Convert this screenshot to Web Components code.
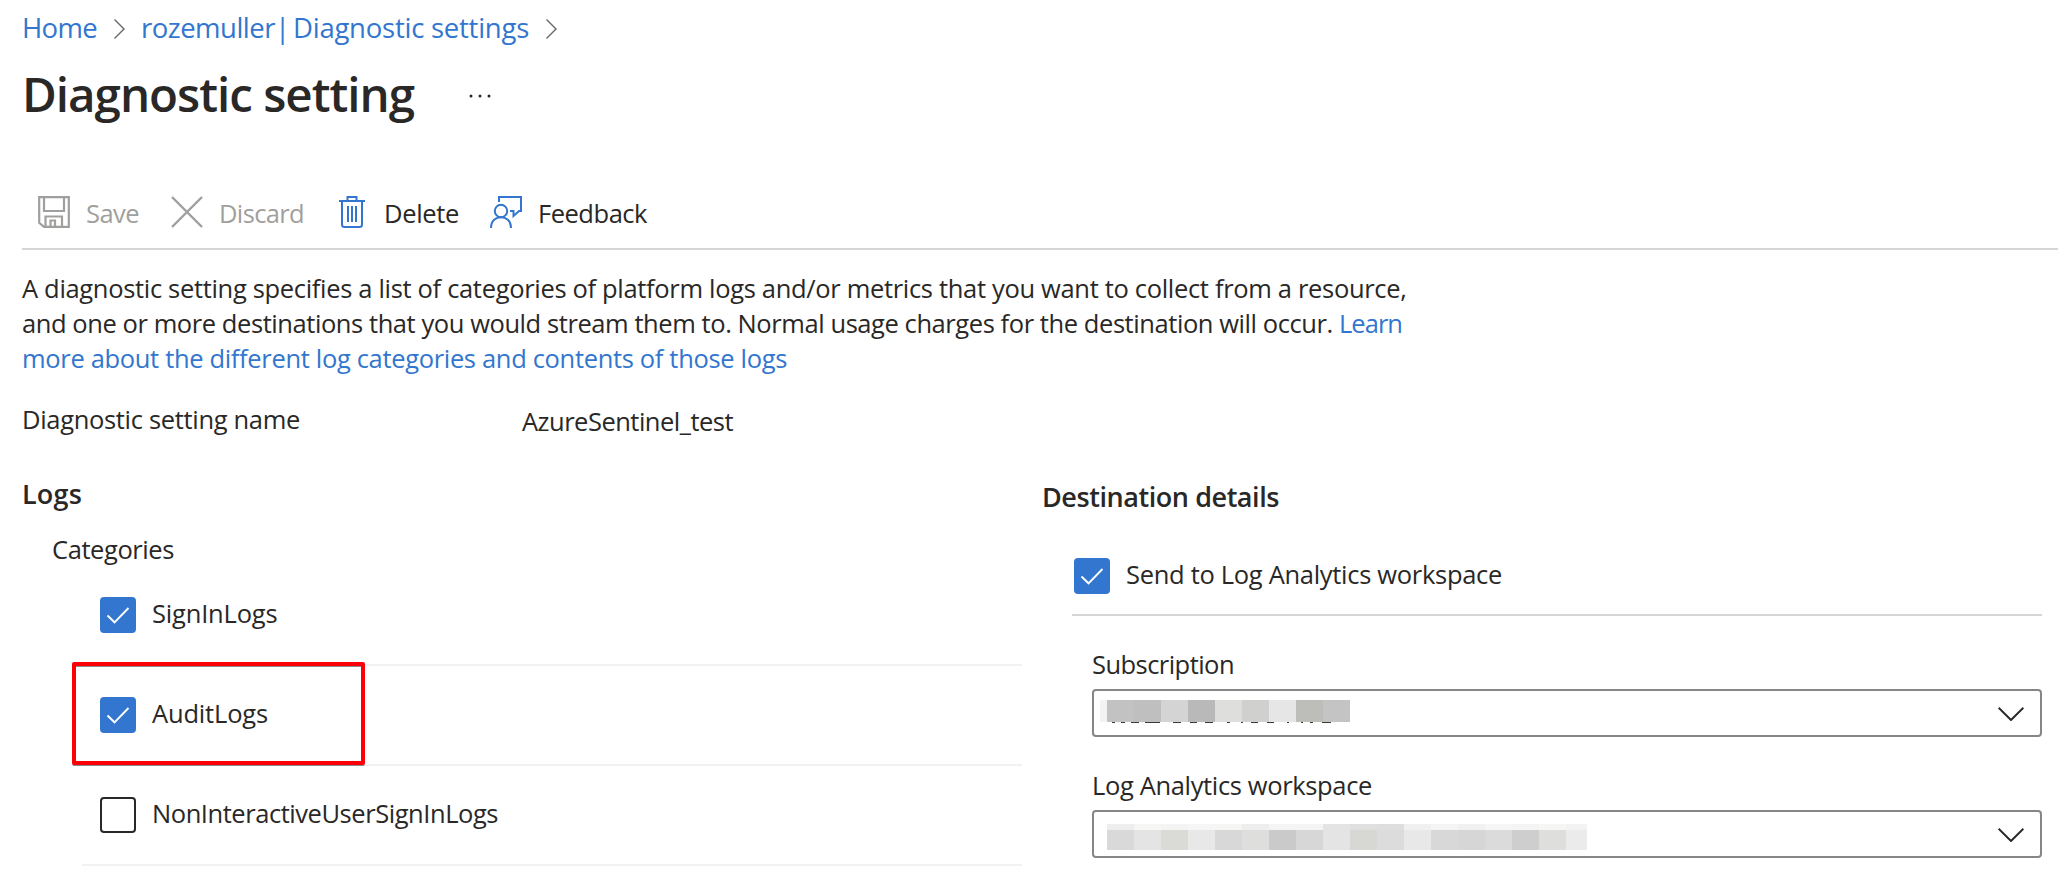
<!DOCTYPE html>
<html lang="en">
<head>
<meta charset="utf-8">
<title>Diagnostic setting</title>
<style>
html,body{margin:0;background:#fff;overflow:hidden}
body{font-family:"Open Sans","Noto Sans",sans-serif;color:#292827;width:2058px;height:884px}
</style>
</head>
<body>
<diagnostic-page></diagnostic-page>
<script>
const define=(name,html,after)=>customElements.define(name,class extends HTMLElement{
  constructor(){super();const t=document.createElement('template');t.innerHTML=html;
    this.attachShadow({mode:'open'}).append(t.content.cloneNode(true));}
  connectedCallback(){if(after)after.call(this,this.shadowRoot);}
});

/* Single-line label whose tracking is adjusted to a given width. */
define('ui-text',`<style>
:host{display:block;white-space:pre;font-size:25.5px;line-height:36px;flex:none}
span{display:inline-block}
</style><span><slot></slot></span>`,function(r){
  const s=r.querySelector('span'),w=+this.getAttribute('w');
  if(this.hasAttribute('size'))this.style.fontSize=this.getAttribute('size')+'px';
  if(w){const n=this.textContent.length;
    s.style.letterSpacing=((w-s.getBoundingClientRect().width)/n)+'px';
    this.style.width=w+'px';}
});

const icons={
save:['0 0 32 32','<path d="M1.2 1.2H30.8V30.8H6L1.2 26.8Z M6 1.5V15H26V1.5 M7.5 30.5V20.5H24V30.5 M12.5 30.5V24.5H17V30.5" stroke-width="2.2"/>'],
discard:['0 0 32 32','<path d="M1 1L31 31M31 1L1 31" stroke-width="2.4"/>'],
delete:['0 0 26 32','<path d="M0 5H26 M8.5 5V1.1H17.5V5 M3 5V28.5Q3 31 5.5 31H20.5Q23 31 23 28.5V5 M9 10V26 M13 10V26 M17 10V26" stroke-width="2"/>'],
feedback:['0 0 32 32','<circle cx="11" cy="15" r="6.2"/><path d="M1 32C1 17.5 21 17.5 21 32 M9 6V1H31V15H29L23.5 20V15H20" stroke-width="2"/>'],
crumb:['0 0 11 20','<path d="M.5 .5L10 10L.5 19.5" stroke-width="1.4"/>'],
down:['0 0 26 14','<path d="M.6 .8L13 13L25.4 .8" stroke-width="2"/>'],
check:['0 0 36 36','<path d="M7.5 18.5L14.5 25.3L28.5 11" stroke-width="1.9"/>'],
more:['0 0 22 4','<g fill="currentColor" stroke="none"><circle cx="2" cy="2" r="1.5"/><circle cx="11" cy="2" r="1.5"/><circle cx="20" cy="2" r="1.5"/></g>']
};
define('ui-icon',`<style>:host{display:block;flex:none}svg{display:block;fill:none;stroke:currentColor;stroke-width:2}</style>`,function(r){
  const icon=icons[this.getAttribute('name')];
  if(!icon||r.querySelector('svg'))return;
  const [box,body]=icon,d=box.split(' ');
  r.innerHTML+=`<svg viewBox="${box}" width="${d[2]}" height="${d[3]}">${body}</svg>`;
});

define('ui-check',`<style>
:host{display:flex;align-items:flex-start;gap:16px}
.box{box-sizing:border-box;width:36px;height:36px;border:2px solid #292827;border-radius:4px;color:#fff;flex:none}
ui-icon{display:none;margin:-2px}
:host([checked]) .box{background:#3276cf;border-color:#3276cf}
:host([checked]) ui-icon{display:block}
.label{margin-top:-2px}
</style><div class="box"><ui-icon name="check"></ui-icon></div><div class="label"><slot></slot></div>`);

define('log-row',`<style>
:host{display:block;position:relative;box-sizing:border-box;height:100px;padding:31px 0 0 18px;border-bottom:2px solid #f1f1f1}
:host([marked])::after{content:"";position:absolute;box-sizing:border-box;left:-10px;top:-4px;width:293px;height:103px;border:4px solid #fb0007;border-radius:2px;box-shadow:0 1px 0 #8a8a8a,inset 0 1px 0 #8a8a8a}
</style><slot></slot>`);

define('command-button',`<style>
:host{display:flex;align-items:center;height:36px;color:#292827}
.i{color:#3276cf;flex:none}
:host([disabled]),:host([disabled]) .i{color:#a19f9d}
.t{padding-top:2px}
</style><div class="i"></div><div class="t"><slot></slot></div>`,function(r){
  const slot=r.querySelector('.i');
  slot.innerHTML=`<ui-icon name="${this.getAttribute('icon')}"></ui-icon>`;
  slot.style.marginRight=this.getAttribute('gap')+'px';
});

define('ui-select',`<style>
:host{display:flex;justify-content:space-between;box-sizing:border-box;width:950px;height:48px;margin-top:7px;border:2px solid #868686;border-radius:4px;padding:0 16px 0 0}
ui-icon{margin-top:16px;color:#292827}
</style><slot></slot><ui-icon name="down"></ui-icon>`);

/* Redacted value: a strip of flat blocks. */
define('redacted-value',`<style>:host{display:block}svg{display:block}</style>`,function(r){
  let out='',w,h;
  if(this.getAttribute('kind')==='subscription'){
    w=250;h=24;
    out='<rect width="7" height="22" fill="#f3f3f3"/>';
    ['#c2c2c2','#bfbfbf','#d4d4d4','#b9b9b9','#dededc','#d0d0ce','#e6e6e6','#bdbdba','#c4c4c4'].forEach((c,i)=>out+=`<rect x="${7+27*i}" width="27" height="22" fill="${c}"/>`);
    [[97,105],[122,136],[152,177],[196,240],[278,302],[330,352],[374,398],[442,450],[484,490],[512,534],[560,582],[622,628],[662,668],[690,698],[726,752]].forEach(([a,b])=>out+=`<rect x="${a/3-20}" y="22" width="${(b-a)/3}" height="1" fill="#3a3938"/>`);
  }else{
    w=480;h=26;
    const top=['#eeeeee','#f6f6f4','#f4f4f4','#f6f6f6','#f6f6f4','#eeeeee','#f5f5f5','#f5f5f5','#e4e4e4','#e0e0e0','#dedede','#f0f0f0','#f5f5f5','#f1f1f1','#f6f6f6','#f4f4f4','#f6f6f4','#f3f3f3'];
    const low=['#d9d9d9','#e4e4e4','#dadad7','#e8e8e8','#d8d8d8','#dededc','#cacaca','#d7d7d7','#e4e4e4','#d7d7d4','#dcdcdc','#e8e8e8','#d8d8d8','#d6d6d6','#dbdbdb','#cecece','#dededc','#ebebeb'];
    top.forEach((c,i)=>out+=`<rect x="${27*i}" width="27" height="6" fill="${c}"/><rect x="${27*i}" y="6" width="27" height="20" fill="${low[i]}"/>`);
  }
  r.innerHTML+=`<svg width="${w}" height="${h}" shape-rendering="crispEdges">${out}</svg>`;
});

define('diagnostic-page',`<style>
:host{display:block;width:2058px;height:884px;overflow:hidden;background:#fff}
.crumbs{display:flex;align-items:center;height:36px;padding:10px 0 0 22px;color:#3276cf}
.crumbs ui-icon{color:#666;margin-top:2px}
.title{display:flex;padding:16px 0 0 22px;font-weight:600}
.title ui-text{line-height:64px}
.title ui-icon{margin:32px 0 0 55px}
.bar{display:flex;margin-left:22px;padding:68px 0 18px 16px;border-bottom:2px solid #d6d6d6}
.intro{padding:21px 0 0 22px}
.intro ui-text{line-height:35px}
.line{display:flex}
.link{color:#3276cf}
.name{display:flex;padding:25px 0 0 22px}
.name ui-text+ui-text{padding-top:2px;margin-bottom:-2px}
.cols{display:grid;grid-template-columns:1022px 1fr}
.logs{padding-top:39px}
.dest{padding-top:42px}
.h{font-weight:600;padding-left:22px}
.cat{padding:19px 0 0 52px;height:35px}
.rows{margin-left:82px}
.dest .h{padding-left:20px}
.send{margin:43px 16px 0 50px;padding-left:2px;height:56px;border-bottom:2px solid #d6d6d6}
.field{margin:30px 0 0 70px}
</style>
<div class="crumbs"><ui-text size="27.5" w="75">Home</ui-text><ui-icon name="crumb" style="margin-left:17px;margin-right:16px"></ui-icon><ui-text size="27.5" w="134">rozemuller</ui-text><ui-text size="27.5" w="18">|</ui-text><ui-text size="27.5" w="236">Diagnostic settings</ui-text><ui-icon name="crumb" style="margin-left:17px"></ui-icon></div>
<div class="title"><ui-text size="47.5" w="392">Diagnostic setting</ui-text><ui-icon name="more"></ui-icon></div>
<div class="bar">
<command-button icon="save" gap="16" disabled><ui-text w="53">Save</ui-text></command-button>
<command-button icon="discard" gap="16" disabled style="margin-left:32px"><ui-text w="85">Discard</ui-text></command-button>
<command-button icon="delete" gap="19" style="margin-left:35px"><ui-text w="75">Delete</ui-text></command-button>
<command-button icon="feedback" gap="16" style="margin-left:31px"><ui-text w="109">Feedback</ui-text></command-button>
</div>
<div class="intro">
<ui-text w="1384.5">A diagnostic setting specifies a list of categories of platform logs and/or metrics that you want to collect from a resource,</ui-text>
<div class="line"><ui-text w="1317">and one or more destinations that you would stream them to. Normal usage charges for the destination will occur. </ui-text><ui-text class="link" w="63">Learn</ui-text></div>
<ui-text class="link" w="765">more about the different log categories and contents of those logs</ui-text>
</div>
<div class="name"><ui-text w="278" style="margin-right:222px">Diagnostic setting name</ui-text><ui-text w="211">AzureSentinel_test</ui-text></div>
<div class="cols">
<div class="logs">
<ui-text class="h" size="27" w="60">Logs</ui-text>
<div class="cat"><ui-text w="122">Categories</ui-text></div>
<div class="rows">
<log-row><ui-check checked><ui-text w="125.5">SignInLogs</ui-text></ui-check></log-row>
<log-row marked><ui-check checked><ui-text w="116">AuditLogs</ui-text></ui-check></log-row>
<log-row><ui-check><ui-text w="346">NonInteractiveUserSignInLogs</ui-text></ui-check></log-row>
</div>
</div>
<div class="dest">
<ui-text class="h" size="27" w="237">Destination details</ui-text>
<div class="send"><ui-check checked><ui-text w="376">Send to Log Analytics workspace</ui-text></ui-check></div>
<div class="field"><ui-text w="142">Subscription</ui-text><ui-select><redacted-value kind="subscription" style="margin:9px 0 0 6px"></redacted-value></ui-select></div>
<div class="field"><ui-text w="280">Log Analytics workspace</ui-text><ui-select><redacted-value kind="workspace" style="margin:12px 0 0 13px"></redacted-value></ui-select></div>
</div>
</div>`);
</script>
</body>
</html>
